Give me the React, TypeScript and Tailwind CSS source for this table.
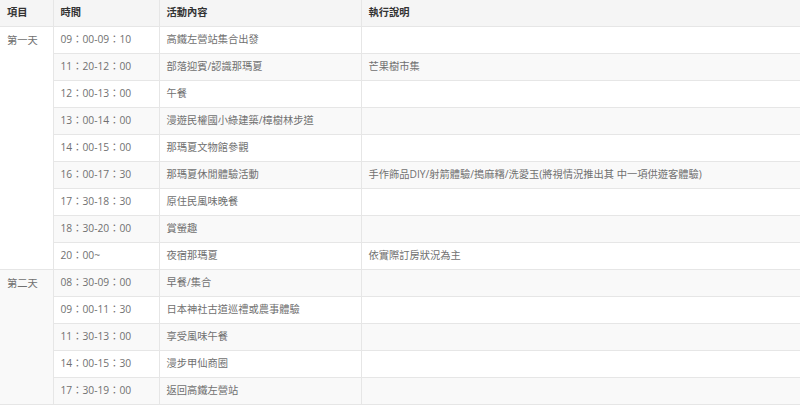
import React from "react";

type Row = { day?: string; span?: number; time: string; act: string; note?: string };

const rows: Row[] = [
  { day: "第一天", span: 9, time: "09：00-09：10", act: "高鐵左營站集合出發" },
  { time: "11：20-12：00", act: "部落迎賓/認識那瑪夏", note: "芒果樹市集" },
  { time: "12：00-13：00", act: "午餐" },
  { time: "13：00-14：00", act: "漫遊民權國小綠建築/樟樹林步道" },
  { time: "14：00-15：00", act: "那瑪夏文物館參觀" },
  {
    time: "16：00-17：30",
    act: "那瑪夏休閒體驗活動",
    note: "手作飾品DIY/射箭體驗/搗麻糬/洗愛玉(將視情況推出其 中一項供遊客體驗)",
  },
  { time: "17：30-18：30", act: "原住民風味晚餐" },
  { time: "18：30-20：00", act: "賞螢趣" },
  { time: "20：00~", act: "夜宿那瑪夏", note: "依實際訂房狀況為主" },
  { day: "第二天", span: 5, time: "08：30-09：00", act: "早餐/集合" },
  { time: "09：00-11：30", act: "日本神社古道巡禮或農事體驗" },
  { time: "11：30-13：00", act: "享受風味午餐" },
  { time: "14：00-15：30", act: "漫步甲仙商圈" },
  { time: "17：30-19：00", act: "返回高鐵左營站" },
];

const cell = "border border-[#e6e6e6] px-[7px] py-0 text-left align-middle";

export default function App() {
  return (
    <div
      className="h-[406px] w-[800px] overflow-hidden bg-white text-[10.25px] text-[#707070]"
      style={{ fontFamily: '"Open Sans", "Noto Sans CJK TC", sans-serif' }}
    >
      <table className="w-[800px] table-fixed border-collapse">
        <colgroup>
          <col className="w-[53px]" />
          <col className="w-[106px]" />
          <col className="w-[202px]" />
          <col className="w-[439px]" />
        </colgroup>
        <thead>
          <tr className="h-[26px] bg-[#f5f5f5] text-[#333]">
            <th className={`${cell} border-t-0 border-l-0 font-bold`}>項目</th>
            <th className={`${cell} border-t-0 font-bold`}>時間</th>
            <th className={`${cell} border-t-0 font-bold`}>活動內容</th>
            <th className={`${cell} border-t-0 font-bold`}>執行說明</th>
          </tr>
        </thead>
        <tbody>
          {rows.map((r, i) => (
            <tr key={i} className={`h-[27px] ${i % 2 === 1 ? "bg-[#f9f9f9]" : "bg-white"}`}>
              {r.day && (
                <td rowSpan={r.span} className={`${cell} border-l-0 align-top pt-[6px]`}>
                  {r.day}
                </td>
              )}
              <td className={cell}>{r.time}</td>
              <td className={cell}>{r.act}</td>
              <td className={cell}>{r.note ?? ""}</td>
            </tr>
          ))}
        </tbody>
      </table>
    </div>
  );
}
